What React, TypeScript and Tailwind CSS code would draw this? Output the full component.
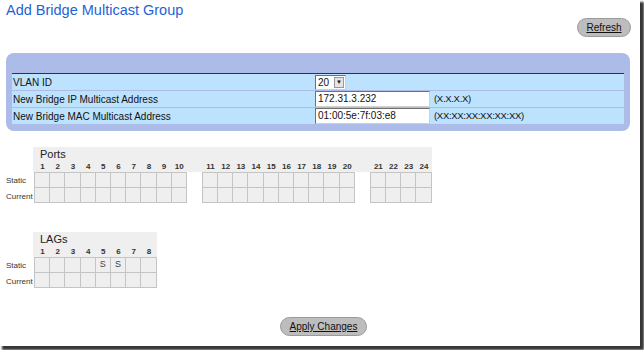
import React from "react";

const font = { fontFamily: '"Liberation Sans", Arial, sans-serif' };

function Cell({ text }: { text?: string }) {
  return (
    <div className="w-[15.2px] h-[15px] border-r border-b border-[#c4c4c4] bg-[#efefef] flex items-center justify-center text-[9px] text-[#444]">
      {text}
    </div>
  );
}

function Grid({
  title,
  groups,
  marks = {},
}: {
  title: string;
  groups: number[][];
  marks?: Record<number, string>;
}) {
  return (
    <div className="flex">
      <div className="w-[33px] pl-[6px] flex flex-col">
        <div className="h-[25px]" />
        <div className="h-[15px] flex items-end pb-[2px] text-[8px] leading-[8px] text-[#333]">Static</div>
        <div className="h-[15px] flex items-end pb-[1px] text-[8px] leading-[8px] text-[#333]">Current</div>
      </div>
      <div className="flex flex-col">
        <div className="h-[25px] bg-[#efefef] pl-[1px] flex flex-col">
          <div className="pl-[6px] pt-[1px] text-[11px] leading-[12px] text-[#222]">{title}</div>
          <div className="flex gap-[15px] mt-[2px]">
            {groups.map((g, i) => (
              <div key={i} className="flex pl-[1px]">
                {g.map((n) => (
                  <div
                    key={n}
                    className="w-[15.2px] text-center text-[8px] leading-[9px] font-bold text-[#333]"
                  >
                    {n}
                  </div>
                ))}
              </div>
            ))}
          </div>
        </div>
        {[0, 1].map((r) => (
          <div key={r} className="flex gap-[15px] pl-[1px]">
            {groups.map((g, i) => (
              <div key={i} className={"flex border-l border-[#c4c4c4] " + (r === 0 ? "border-t" : "")}>
                {g.map((n) => (
                  <Cell key={n} text={r === 0 ? marks[n] : undefined} />
                ))}
              </div>
            ))}
          </div>
        ))}
      </div>
    </div>
  );
}

function Input({ value }: { value: string }) {
  return (
    <div className="w-[115px] h-[16px] bg-white border border-[#707070] border-b-[#d0d0d0] border-r-[#d0d0d0] pl-[2px] text-[10px] leading-[14px] text-[#111]">
      {value}
    </div>
  );
}

const range = (a: number, b: number) => Array.from({ length: b - a + 1 }, (_, i) => a + i);

export default function App() {
  return (
    <div className="w-[644px] h-[350px] bg-white overflow-hidden" style={font}>
      <div className="w-[640px] h-[346px] bg-white shadow-[3px_3px_2px_1px_rgba(20,20,20,0.85)] pt-[3px] flex flex-col">
        <div className="pl-[6px] h-[15px] text-[14.5px] leading-[15px] text-[#1f63d6]">
          Add Bridge Multicast Group
        </div>
        <div className="flex justify-end pr-[9px]">
          <button className="w-[54px] h-[19px] rounded-full bg-[#bdbdbd] border border-[#9a9a9a] text-[10px] text-[#111] underline">
            Refresh
          </button>
        </div>

        <div className="mt-[16px] ml-[6px] mr-[10px] h-[78px] rounded-[8px] bg-[#adbbe8] pt-[20px] px-[6px]">
          <div className="border-t border-[#333] flex flex-col gap-[1px] text-[10px] text-[#111]">
            <div className="h-[16px] bg-[#bde2fe] flex items-center">
              <div className="w-[303px] pl-[1px]">VLAN ID</div>
              <div className="w-[31px] h-[15px] bg-white border border-[#707070] border-b-[#d0d0d0] border-r-[#d0d0d0] flex items-center justify-between pl-[2px] pr-[1px]">
                <span className="leading-[13px]">20</span>
                <span className="w-[10px] h-[11px] bg-[#e4e4e4] border border-[#999] flex items-center justify-center text-[6px] leading-[6px]">
                  ▼
                </span>
              </div>
            </div>
            <div className="h-[16px] bg-[#bde2fe] flex items-center">
              <div className="w-[303px] pl-[1px]">New Bridge IP Multicast Address</div>
              <Input value="172.31.3.232" />
              <div className="pl-[4px] text-[9.5px] tracking-[-0.3px]">(X.X.X.X)</div>
            </div>
            <div className="h-[16px] bg-[#bde2fe] flex items-center">
              <div className="w-[303px] pl-[1px]">New Bridge MAC Multicast Address</div>
              <Input value="01:00:5e:7f:03:e8" />
              <div className="pl-[4px] text-[9.5px] tracking-[-0.3px]">(XX:XX:XX:XX:XX:XX)</div>
            </div>
          </div>
        </div>

        <div className="mt-[16px]">
          <Grid title="Ports" groups={[range(1, 10), range(11, 20), range(21, 24)]} />
        </div>

        <div className="mt-[29px]">
          <Grid title="LAGs" groups={[range(1, 8)]} marks={{ 5: "S", 6: "S" }} />
        </div>

        <div className="mt-[29px] flex justify-center pl-[7px]">
          <button className="w-[87px] h-[19px] rounded-full bg-[#bdbdbd] border border-[#9a9a9a] text-[10px] text-[#111] underline">
            Apply Changes
          </button>
        </div>
      </div>
    </div>
  );
}
